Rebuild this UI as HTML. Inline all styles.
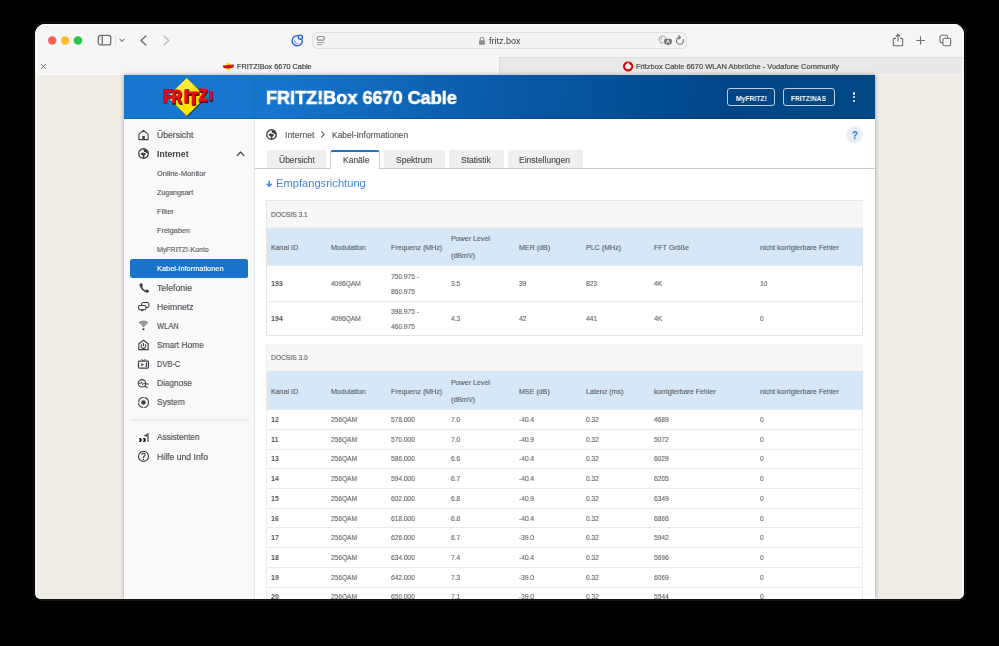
<!DOCTYPE html>
<html><head><meta charset="utf-8">
<style>
*{margin:0;padding:0;box-sizing:border-box}
html,body{width:999px;height:646px;background:#000;overflow:hidden;font-family:"Liberation Sans",sans-serif}
.a{position:absolute}
.t{position:absolute;line-height:1;white-space:nowrap;transform-origin:0 0;will-change:transform}
#win{position:absolute;left:0;top:0;width:999px;height:646px;clip-path:inset(24px 35px 47px 35px round 10px 10px 6px 6px);background:#f0ede6}
</style></head><body>

<div class="a" style="left:32.8px;top:22.3px;width:933.5px;height:578.5px;border-radius:12px 12px 8px 8px;background:#131313"></div>
<div class="a" style="left:34.4px;top:23.3px;width:930.2px;height:576.2px;border-radius:10.5px 10.5px 6.5px 6.5px;background:#000"></div>
<div id="win">
<div class="a" style="left:35px;top:24px;width:929px;height:33px;background:#f6f6f6"></div>
<div class="a" style="left:35px;top:24px;width:929px;height:2px;background:#fcfcfc"></div>
<svg class="a" style="left:44px;top:32px" width="42" height="17" viewBox="0 0 42 17"><circle cx="8.2" cy="8.5" r="4.2" fill="#ff5f57"/><circle cx="21.1" cy="8.5" r="4.2" fill="#febc2e"/><circle cx="34" cy="8.5" r="4.2" fill="#28c840"/></svg>
<svg class="a" style="left:97px;top:34px" width="15" height="12" viewBox="0 0 15 12"><rect x="1.3" y="1.3" width="12.4" height="9.6" rx="2.2" fill="none" stroke="#6f6f6f" stroke-width="1.3"/><line x1="5.3" y1="1.5" x2="5.3" y2="10.8" stroke="#6f6f6f" stroke-width="1.2"/><line x1="2.9" y1="3.6" x2="3.9" y2="3.6" stroke="#9a9a9a" stroke-width="0.8"/><line x1="2.9" y1="5.2" x2="3.9" y2="5.2" stroke="#9a9a9a" stroke-width="0.8"/></svg>
<div class="a" style="left:115px;top:35px;width:1px;height:11px;background:#e2e2e2"></div>
<svg class="a" style="left:118px;top:37px" width="8" height="6" viewBox="0 0 8 6"><polyline points="1.9,2.2 4,4.3 6.1,2.2" fill="none" stroke="#7a7a7a" stroke-width="1.05" stroke-linecap="round" stroke-linejoin="round"/></svg>
<svg class="a" style="left:139px;top:35px" width="9" height="11" viewBox="0 0 9 11"><polyline points="6.8,1 2,5.5 6.8,10" fill="none" stroke="#6a6a6a" stroke-width="1.3" stroke-linecap="round" stroke-linejoin="round"/></svg>
<svg class="a" style="left:162px;top:35px" width="9" height="11" viewBox="0 0 9 11"><polyline points="2,1 6.8,5.5 2,10" fill="none" stroke="#b9b9b9" stroke-width="1.3" stroke-linecap="round" stroke-linejoin="round"/></svg>
<svg class="a" style="left:290px;top:33px" width="14" height="14" viewBox="0 0 14 14"><path d="M9.6 3.2 A5.1 5.1 0 1 0 12.3 7.2" fill="none" stroke="#1f5fe3" stroke-width="1.35" stroke-linecap="round"/><path d="M4.1 6.5 A3.3 3.3 0 0 0 8.4 10.8 A12 12 0 0 1 4.1 6.5 Z" fill="#8fb0f2"/><circle cx="10.4" cy="4.2" r="2.05" fill="#fff" stroke="#1f5fe3" stroke-width="1.3"/></svg>
<div class="a" style="left:312px;top:32px;width:375px;height:17.3px;border-radius:5.5px;background:#f3f3f3;box-shadow:inset 0 0 0 1px #e0e0e0"></div>
<svg class="a" style="left:316px;top:35px" width="10" height="11" viewBox="0 0 10 11"><rect x="1.2" y="1.5" width="7.2" height="3.6" rx="1.4" fill="none" stroke="#8a8a8a" stroke-width="1.1"/><line x1="1" y1="7.6" x2="8.4" y2="7.6" stroke="#a0a0a0" stroke-width="1"/><line x1="1" y1="9.6" x2="6" y2="9.6" stroke="#a0a0a0" stroke-width="1"/></svg>
<svg class="a" style="left:478px;top:36px" width="8" height="10" viewBox="0 0 8 10"><path d="M2.2 4.3 V3.1 A1.8 1.8 0 0 1 5.8 3.1 V4.3" fill="none" stroke="#8c8c8c" stroke-width="1.1"/><rect x="1" y="4.3" width="6" height="4.4" rx="0.8" fill="#8c8c8c"/></svg>
<div class="t" style="left:489px;top:37px;font-size:9.0px;color:#3b3b3b;">fritz.box</div>
<svg class="a" style="left:658px;top:35px" width="15" height="11" viewBox="0 0 15 11"><path d="M4.6 1 C2.4 1 1.2 2.5 1.2 4.3 C1.2 5.8 2 6.9 3.1 7.3 L2.9 8.6 L4.4 7.6 L5.6 7.6" fill="none" stroke="#a3a3a3" stroke-width="1"/><path d="M4.6 1 C6.6 1 7.8 2.2 7.9 3.8" fill="none" stroke="#a3a3a3" stroke-width="1"/><path d="M3.3 2.6 L3.3 5.2 M2.6 3.3 L4.4 3.3" stroke="#b0b0b0" stroke-width="0.7"/><rect x="6.2" y="3.8" width="7.6" height="5.6" rx="1.8" fill="#707070"/><path d="M9.3 9.2 L10.3 10.8 L10.9 9.2 Z" fill="#707070"/><path d="M8.3 8.2 L9.9 4.8 L11.6 8.2 M8.9 7 L11 7" fill="none" stroke="#f4f4f4" stroke-width="0.8"/></svg>
<svg class="a" style="left:675px;top:35px" width="10" height="11" viewBox="0 0 10 11"><path d="M4.9 2.3 A3.5 3.5 0 1 0 8.2 4.6" fill="none" stroke="#757575" stroke-width="1.1" stroke-linecap="round"/><polyline points="3.7,0.6 5.6,2.3 3.7,4" fill="none" stroke="#757575" stroke-width="1.1" stroke-linecap="round" stroke-linejoin="round"/></svg>
<svg class="a" style="left:892px;top:33px" width="12" height="14" viewBox="0 0 12 14"><path d="M4 5.4 H2.3 A1 1 0 0 0 1.3 6.4 V11.8 A1 1 0 0 0 2.3 12.8 H9.7 A1 1 0 0 0 10.7 11.8 V6.4 A1 1 0 0 0 9.7 5.4 H8" fill="none" stroke="#6e6e6e" stroke-width="1.1"/><line x1="6" y1="1.4" x2="6" y2="8.6" stroke="#6e6e6e" stroke-width="1.1"/><polyline points="3.8,3.5 6,1.3 8.2,3.5" fill="none" stroke="#6e6e6e" stroke-width="1.1" stroke-linejoin="round"/></svg>
<svg class="a" style="left:915px;top:35px" width="11" height="11" viewBox="0 0 11 11"><line x1="5.5" y1="1.2" x2="5.5" y2="9.8" stroke="#6e6e6e" stroke-width="1.1"/><line x1="1.2" y1="5.5" x2="9.8" y2="5.5" stroke="#6e6e6e" stroke-width="1.1"/></svg>
<svg class="a" style="left:938px;top:33px" width="15" height="14" viewBox="0 0 15 14"><rect x="2" y="2.3" width="7.6" height="7.6" rx="1.8" fill="none" stroke="#6e6e6e" stroke-width="1.1"/><rect x="4.9" y="5.2" width="7.8" height="7.6" rx="1.8" fill="#f6f6f6" stroke="#6e6e6e" stroke-width="1.1"/></svg>
<div class="a" style="left:35px;top:57px;width:929px;height:18px;background:#f6f6f6"></div>
<div class="a" style="left:499px;top:57px;width:465px;height:18px;background:#e8e8e8;border-top:1px solid #dcdcdc;border-left:1px solid #d9d9d9"></div>
<div class="a" style="left:35px;top:74px;width:929px;height:1px;background:rgba(255,255,255,0.55)"></div>
<svg class="a" style="left:40px;top:63px" width="7" height="7" viewBox="0 0 7 7"><line x1="1" y1="1" x2="6" y2="6" stroke="#7a7a7a" stroke-width="1"/><line x1="6" y1="1" x2="1" y2="6" stroke="#7a7a7a" stroke-width="1"/></svg>
<svg class="a" style="left:222px;top:61px" width="13" height="11" viewBox="0 0 13 11"><polygon points="6.3,1.3 10.8,5.6 6.3,10 1.8,5.6" fill="#ffe000"/><path d="M1 3.9 L4 4.6 L7 3.8 L12 3.6 L11.5 6.4 L8 7.2 L5 7.6 L1.4 7.1 Z" fill="#d3141c"/><path d="M4.5 4.6 L7.5 4.2 L7.2 6.6 L4.8 7 Z" fill="#a50e16" opacity="0.6"/></svg>
<div class="t" style="left:236.8px;top:63px;font-size:7.3px;color:#404040;-webkit-text-stroke:0.2px currentColor;">FRITZ!Box 6670 Cable</div>
<svg class="a" style="left:622px;top:60px" width="12" height="12" viewBox="0 0 12 12"><circle cx="6.1" cy="6.3" r="4.1" fill="#fff" stroke="#e60000" stroke-width="2.1"/><path d="M6.2 1.8 Q6 3.4 6.9 4.6" fill="none" stroke="#fff" stroke-width="0.8"/><path d="M7.2 2.4 Q8.6 3.2 8.4 5" fill="none" stroke="#e60000" stroke-width="1.3"/></svg>
<div class="t" style="left:636.4px;top:63px;font-size:7.5px;color:#4c4c4c;-webkit-text-stroke:0.2px currentColor;">Fritzbox Cable 6670 WLAN Abbrüche - Vodafone Community</div>
<div class="a" style="left:35px;top:75px;width:929px;height:524px;background:#f0ede6"></div>
<div class="a" style="left:35.5px;top:24px;width:1.2px;height:575px;background:rgba(255,255,252,0.85)"></div>
<div class="a" style="left:962.3px;top:24px;width:1.2px;height:575px;background:rgba(255,255,252,0.85)"></div>
<div class="a" style="left:124px;top:75px;width:751px;height:524px;box-shadow:0 0 4px rgba(0,0,0,0.38)"></div>
<div class="a" style="left:124px;top:75px;width:751px;height:524px;background:#fff"></div>
<div class="a" style="left:124px;top:75px;width:751px;height:44px;background:linear-gradient(95deg,#1877cf 0%,#1775cc 20%,#0a59a8 50%,#004687 80%,#004884 100%)"></div>
<div class="a" style="left:254px;top:75px;width:1px;height:44px;background:rgba(0,0,0,0.08)"></div>
<div class="a" style="left:124px;top:118px;width:751px;height:1px;background:rgba(0,0,0,0.12)"></div>
<svg class="a" style="left:162px;top:76px" width="56" height="42" viewBox="0 0 56 42">
<polygon points="24.8,2 44,21 24.8,40 5.6,21" fill="#0b2f6a" transform="translate(0.8,0.8)"/>
<polygon points="24.8,2 44,21 24.8,40 5.6,21" fill="#ffe400"/>
<polygon points="24.8,2.6 33,10.6 15,19 11,15" fill="#fff7a0" opacity="0.35"/>
<g font-family="Liberation Sans" font-weight="bold" fill="#2a0606" stroke="#2a0606" stroke-width="1.5" transform="translate(0.8,0.9)"><text x="1.26" y="26.5" font-size="18.85" textLength="8.03" lengthAdjust="spacingAndGlyphs">F</text><text x="9.66" y="27" font-size="18.85" textLength="9.67" lengthAdjust="spacingAndGlyphs">R</text><text x="21.78" y="26.5" font-size="18.44" textLength="4.79" lengthAdjust="spacingAndGlyphs">I</text><text x="26.38" y="27.7" font-size="16.48" textLength="9.63" lengthAdjust="spacingAndGlyphs">T</text><text x="36.46" y="24.9" font-size="16.9" textLength="8.77" lengthAdjust="spacingAndGlyphs">Z</text><text x="46.73" y="24.3" font-size="13.41" textLength="3.89" lengthAdjust="spacingAndGlyphs">!</text></g>
<g font-family="Liberation Sans" font-weight="bold" fill="#ea0a1e" stroke="#ea0a1e" stroke-width="0.9"><text x="1.26" y="26.5" font-size="18.85" textLength="8.03" lengthAdjust="spacingAndGlyphs">F</text><text x="9.66" y="27" font-size="18.85" textLength="9.67" lengthAdjust="spacingAndGlyphs">R</text><text x="21.78" y="26.5" font-size="18.44" textLength="4.79" lengthAdjust="spacingAndGlyphs">I</text><text x="26.38" y="27.7" font-size="16.48" textLength="9.63" lengthAdjust="spacingAndGlyphs">T</text><text x="36.46" y="24.9" font-size="16.9" textLength="8.77" lengthAdjust="spacingAndGlyphs">Z</text><text x="46.73" y="24.3" font-size="13.41" textLength="3.89" lengthAdjust="spacingAndGlyphs">!</text></g></svg>
<div class="t" style="left:265.8px;top:89px;font-size:18.6px;color:#fff;font-weight:bold;transform:scaleX(0.972);-webkit-text-stroke:0.6px #fff;">FRITZ!Box 6670 Cable</div>
<div class="a" style="left:727.3px;top:88.2px;width:47.7px;height:17.5px;border:1px solid rgba(220,232,245,0.85);border-radius:3px"></div>
<div class="t" style="left:735.6px;top:95px;font-size:7.3px;color:#fff;font-weight:bold;transform:scaleX(0.93);">MyFRITZ!</div>
<div class="a" style="left:782.7px;top:88.2px;width:52.1px;height:17.5px;border:1px solid rgba(220,232,245,0.85);border-radius:3px"></div>
<div class="t" style="left:790.9px;top:95px;font-size:7.3px;color:#fff;font-weight:bold;transform:scaleX(0.91);">FRITZ!NAS</div>
<div class="a" style="left:853.3px;top:92.4px;width:2.2px;height:2.2px;border-radius:50%;background:#fff"></div>
<div class="a" style="left:853.3px;top:96.10000000000001px;width:2.2px;height:2.2px;border-radius:50%;background:#fff"></div>
<div class="a" style="left:853.3px;top:99.80000000000001px;width:2.2px;height:2.2px;border-radius:50%;background:#fff"></div>
<div class="a" style="left:124px;top:119px;width:130px;height:480px;background:#f9f9f9"></div>
<div class="a" style="left:254px;top:119px;width:1px;height:480px;background:#e8e8e8"></div>
<div class="t" style="left:157px;top:131px;font-size:8.6px;color:#4a4e54;transform:scaleX(0.997);-webkit-text-stroke:0.15px currentColor;">Übersicht</div>
<div class="t" style="left:157px;top:150px;font-size:8.6px;color:#3a3e44;font-weight:bold;">Internet</div>
<svg class="a" style="left:236px;top:150px" width="9" height="7" viewBox="0 0 9 7"><polyline points="1.2,5.6 4.5,2 7.8,5.6" fill="none" stroke="#3c4046" stroke-width="1.2" stroke-linecap="round" stroke-linejoin="round"/></svg>
<div class="t" style="left:157px;top:170px;font-size:7.4px;color:#54585e;transform:scaleX(1.006);-webkit-text-stroke:0.15px currentColor;">Online-Monitor</div>
<div class="t" style="left:157px;top:189px;font-size:7.4px;color:#54585e;transform:scaleX(0.969);-webkit-text-stroke:0.15px currentColor;">Zugangsart</div>
<div class="t" style="left:157px;top:208px;font-size:7.4px;color:#54585e;transform:scaleX(1.028);-webkit-text-stroke:0.15px currentColor;">Filter</div>
<div class="t" style="left:157px;top:227px;font-size:7.4px;color:#54585e;transform:scaleX(0.986);-webkit-text-stroke:0.15px currentColor;">Freigaben</div>
<div class="t" style="left:157px;top:246px;font-size:7.4px;color:#54585e;transform:scaleX(0.948);-webkit-text-stroke:0.15px currentColor;">MyFRITZ!-Konto</div>
<div class="a" style="left:130px;top:259px;width:118px;height:19px;background:#1b74cc;border-radius:2.5px"></div>
<div class="t" style="left:157px;top:265px;font-size:7.4px;color:#fff;-webkit-text-stroke:0.15px #fff;">Kabel-Informationen</div>
<div class="t" style="left:157px;top:284px;font-size:8.6px;color:#4a4e54;transform:scaleX(1.018);-webkit-text-stroke:0.15px currentColor;">Telefonie</div>
<div class="t" style="left:157px;top:303px;font-size:8.6px;color:#4a4e54;transform:scaleX(1.004);-webkit-text-stroke:0.15px currentColor;">Heimnetz</div>
<div class="t" style="left:157px;top:322px;font-size:8.6px;color:#4a4e54;transform:scaleX(0.88);-webkit-text-stroke:0.15px currentColor;">WLAN</div>
<div class="t" style="left:157px;top:341px;font-size:8.6px;color:#4a4e54;transform:scaleX(0.969);-webkit-text-stroke:0.15px currentColor;">Smart Home</div>
<div class="t" style="left:157px;top:360px;font-size:8.6px;color:#4a4e54;transform:scaleX(0.871);-webkit-text-stroke:0.15px currentColor;">DVB-C</div>
<div class="t" style="left:157px;top:379px;font-size:8.6px;color:#4a4e54;transform:scaleX(0.961);-webkit-text-stroke:0.15px currentColor;">Diagnose</div>
<div class="t" style="left:157px;top:398px;font-size:8.6px;color:#4a4e54;transform:scaleX(0.975);-webkit-text-stroke:0.15px currentColor;">System</div>
<div class="a" style="left:130.5px;top:419px;width:118px;height:2px;background:#ebebeb"></div>
<div class="t" style="left:157px;top:433px;font-size:8.6px;color:#4a4e54;transform:scaleX(0.958);-webkit-text-stroke:0.15px currentColor;">Assistenten</div>
<div class="t" style="left:157px;top:453px;font-size:8.6px;color:#4a4e54;transform:scaleX(1.006);-webkit-text-stroke:0.15px currentColor;">Hilfe und Info</div>
<svg class="a" style="left:137px;top:129px" width="13" height="12" viewBox="0 0 13 12"><path d="M1.9 10.6 V5.2 L6.5 1.3 L11.1 5.2 V10.6 Z" fill="none" stroke="#3c4046" stroke-width="1.1" stroke-linejoin="round"/><rect x="5.3" y="6.9" width="2.5" height="3.8" fill="#3c4046"/></svg>
<svg class="a" style="left:137.3px;top:147.2px" width="13" height="13" viewBox="0 0 13 13"><circle cx="6.5" cy="6.5" r="4.75" fill="none" stroke="#3c4046" stroke-width="1.35"/><path d="M6.9 1.9 L9.6 2.8 L11 5 L10.9 6.2 L9.2 5.9 L8.4 5.1 L7.2 4.9 L6.6 3.6 Z" fill="#3c4046"/><path d="M3.6 6.2 L5.6 5.6 L8.2 6.1 L8.9 6.9 L7.6 8.4 L7.1 10.9 L6.2 10.9 L5.7 8.6 L4.1 7.5 Z" fill="#3c4046"/><path d="M11.2 7.3 L8.9 11.2 L10.2 10.4 L11.3 8.6 Z" fill="#3c4046"/><path d="M2.2 5.0 L4.6 3.0 L3.2 3.2 Z" fill="#3c4046"/></svg>
<svg class="a" style="left:138px;top:282px" width="12" height="12" viewBox="0 0 12 12"><path d="M2.3 1.4 L3.9 1.2 L5 3.6 L4 4.8 Q5 7.4 7.4 8.4 L8.6 7.3 L10.9 8.5 L10.7 10.1 Q10 11 8.6 10.7 Q3.6 9.2 1.5 3.6 Q1.3 2.2 2.3 1.4 Z" fill="#3c4046"/></svg>
<svg class="a" style="left:137px;top:301px" width="13" height="11" viewBox="0 0 13 11"><rect x="4.6" y="1.5" width="7.3" height="4.9" rx="1.5" fill="#f9f9f9" stroke="#3c4046" stroke-width="1.05"/><rect x="1.6" y="4.4" width="7.4" height="4.3" rx="1.4" fill="#f9f9f9" stroke="#3c4046" stroke-width="1.05"/><rect x="3.9" y="8.4" width="2.5" height="1.7" fill="#3c4046"/></svg>
<svg class="a" style="left:137px;top:320px" width="13" height="11" viewBox="0 0 13 11"><path d="M6.5 7.6 L1.6 2.3 Q6.5 -1.2 11.4 2.3 Z" fill="#8a8d92"/><path d="M2.9 3.8 Q6.5 1.2 10.1 3.8 M4.2 5.3 Q6.5 3.6 8.8 5.3" fill="none" stroke="#f9f9f9" stroke-width="0.5" opacity="0.6"/><circle cx="6.5" cy="9.3" r="1.05" fill="#2c3036"/></svg>
<svg class="a" style="left:137px;top:339px" width="13" height="12" viewBox="0 0 13 12"><path d="M1.8 10.6 V4.8 L6.5 1.2 L11.2 4.8 V10.6 Z" fill="none" stroke="#3c4046" stroke-width="1.1" stroke-linejoin="round"/><path d="M4.9 5.4 A2.3 2.3 0 1 0 8.1 5.4" fill="none" stroke="#3c4046" stroke-width="1.1"/><line x1="6.5" y1="4" x2="6.5" y2="7.2" stroke="#3c4046" stroke-width="1.1"/></svg>
<svg class="a" style="left:137px;top:358px" width="13" height="12" viewBox="0 0 13 12"><rect x="1.5" y="3.2" width="10" height="6.9" rx="0.8" fill="none" stroke="#3c4046" stroke-width="1.2"/><line x1="4.5" y1="1" x2="6.5" y2="3" stroke="#3c4046" stroke-width="0.9"/><line x1="8.5" y1="1" x2="6.5" y2="3" stroke="#3c4046" stroke-width="0.9"/><path d="M4.3 5 V8.3 L7 6.65 Z" fill="#3c4046"/><line x1="9.4" y1="4.5" x2="9.4" y2="9" stroke="#3c4046" stroke-width="1.3"/></svg>
<svg class="a" style="left:137px;top:378px" width="13" height="11" viewBox="0 0 13 11"><circle cx="5" cy="5.3" r="3.7" fill="none" stroke="#3c4046" stroke-width="1.1"/><path d="M1.6 5.4 L3.4 5.4 L4.4 3.9 L5.6 6.8 L6.5 5.4 L8.6 5.4" fill="none" stroke="#3c4046" stroke-width="0.9"/><line x1="7.6" y1="8" x2="10.6" y2="9.8" stroke="#3c4046" stroke-width="1.3"/><line x1="8.8" y1="6" x2="11.6" y2="6" stroke="#3c4046" stroke-width="1.1"/></svg>
<svg class="a" style="left:137px;top:396px" width="13" height="13" viewBox="0 0 13 13"><circle cx="6.5" cy="6.5" r="5" fill="none" stroke="#3c4046" stroke-width="1.1" stroke-dasharray="7 1"/><circle cx="6.5" cy="6.5" r="2.3" fill="#3c4046"/></svg>
<svg class="a" style="left:137px;top:432px" width="13" height="11" viewBox="0 0 13 11"><path d="M1.9 5.9 H4.1 L5 7.9 L4.1 9.9 H1.9 L2.7 7.9 Z" fill="#23272d"/><path d="M5.9 5.9 H8.1 L9 7.9 L8.1 9.9 H5.9 L6.7 7.9 Z" fill="#23272d"/><rect x="10.1" y="1" width="1.8" height="8.8" fill="#7d8187"/><path d="M6.6 3.4 L10.1 2 V4.8 Z" fill="#2c3036"/></svg>
<svg class="a" style="left:137px;top:450px" width="13" height="13" viewBox="0 0 13 13"><circle cx="6.5" cy="6.4" r="5" fill="none" stroke="#3c4046" stroke-width="1.1"/><path d="M4.8 5 Q4.8 3.3 6.5 3.3 Q8.2 3.3 8.2 4.8 Q8.2 5.8 6.8 6.4 L6.5 7.8" fill="none" stroke="#3c4046" stroke-width="1.1"/><circle cx="6.5" cy="9.4" r="0.7" fill="#3c4046"/></svg>
<svg class="a" style="left:265.3px;top:127.9px" width="13" height="13" viewBox="0 0 13 13"><circle cx="6.5" cy="6.5" r="4.75" fill="none" stroke="#3c4046" stroke-width="1.35"/><path d="M6.9 1.9 L9.6 2.8 L11 5 L10.9 6.2 L9.2 5.9 L8.4 5.1 L7.2 4.9 L6.6 3.6 Z" fill="#3c4046"/><path d="M3.6 6.2 L5.6 5.6 L8.2 6.1 L8.9 6.9 L7.6 8.4 L7.1 10.9 L6.2 10.9 L5.7 8.6 L4.1 7.5 Z" fill="#3c4046"/><path d="M11.2 7.3 L8.9 11.2 L10.2 10.4 L11.3 8.6 Z" fill="#3c4046"/><path d="M2.2 5.0 L4.6 3.0 L3.2 3.2 Z" fill="#3c4046"/></svg>
<div class="t" style="left:285.3px;top:131px;font-size:8.7px;color:#54585e;-webkit-text-stroke:0.15px currentColor;">Internet</div>
<svg class="a" style="left:320px;top:130px" width="6" height="9" viewBox="0 0 6 9"><polyline points="1.6,1.5 4.2,4.3 1.6,7.1" fill="none" stroke="#54585e" stroke-width="1.1" stroke-linecap="round" stroke-linejoin="round"/></svg>
<div class="t" style="left:331.6px;top:131px;font-size:8.48px;color:#54585e;-webkit-text-stroke:0.15px currentColor;">Kabel-Informationen</div>
<div class="a" style="left:846px;top:125.9px;width:17px;height:17px;border-radius:50%;background:#e8eff9"></div>
<div class="t" style="left:851.6px;top:131px;font-size:10.2px;color:#1a6fd0;font-weight:bold;transform:scaleX(0.92);">?</div>
<div class="a" style="left:255px;top:168px;width:620px;height:1px;background:#c9c9c9"></div>
<div class="a" style="left:267px;top:150px;width:59.30000000000001px;height:18px;background:#efefef;border-radius:2px 2px 0 0"></div>
<div class="a" style="left:330.4px;top:150.3px;width:50.0px;height:19px;background:#fff;border:1px solid #cfcfcf;border-bottom:none;border-top:2px solid #1b74cc;border-radius:3px 3px 0 0"></div>
<div class="a" style="left:384.4px;top:150px;width:60.60000000000002px;height:18px;background:#efefef;border-radius:2px 2px 0 0"></div>
<div class="a" style="left:449.4px;top:150px;width:54.400000000000034px;height:18px;background:#efefef;border-radius:2px 2px 0 0"></div>
<div class="a" style="left:508.2px;top:150px;width:74.40000000000003px;height:18px;background:#efefef;border-radius:2px 2px 0 0"></div>
<div class="t" style="left:278.6px;top:156px;font-size:8.5px;color:#4a4e54;-webkit-text-stroke:0.15px currentColor;">Übersicht</div>
<div class="t" style="left:342.7px;top:156px;font-size:8.5px;color:#4a4e54;-webkit-text-stroke:0.15px currentColor;">Kanäle</div>
<div class="t" style="left:396px;top:156px;font-size:8.5px;color:#4a4e54;-webkit-text-stroke:0.15px currentColor;">Spektrum</div>
<div class="t" style="left:460.8px;top:156px;font-size:8.5px;color:#4a4e54;-webkit-text-stroke:0.15px currentColor;">Statistik</div>
<div class="t" style="left:519.4px;top:156px;font-size:8.5px;color:#4a4e54;-webkit-text-stroke:0.15px currentColor;">Einstellungen</div>
<svg class="a" style="left:265px;top:180px" width="8" height="8" viewBox="0 0 8 8"><line x1="4.2" y1="0.8" x2="4.2" y2="6" stroke="#3f87d8" stroke-width="1.5"/><polyline points="1.8,3.7 4.2,6.1 6.6,3.7" fill="none" stroke="#3f87d8" stroke-width="1.5" stroke-linejoin="miter"/></svg>
<div class="t" style="left:275.9px;top:178px;font-size:11.15px;color:#3f87d8;">Empfangsrichtung</div>
<div class="a" style="left:266px;top:200px;width:597px;height:136px;border:1px solid #e6e6e6"></div>
<div class="a" style="left:266.5px;top:200.5px;width:596px;height:28px;background:#f7f7f5"></div>
<div class="t" style="left:270.6px;top:211px;font-size:7.6px;color:#555a60;transform:scaleX(0.88);-webkit-text-stroke:0.12px currentColor;">DOCSIS 3.1</div>
<div class="a" style="left:266.5px;top:227.7px;width:596px;height:38.5px;background:#d6e7f7;box-shadow:0 -0.5px 0 rgba(0,0,0,0.06)"></div>
<div class="t" style="left:270.6px;top:244px;font-size:7.6px;color:#555a60;transform:scaleX(0.934);-webkit-text-stroke:0.12px currentColor;">Kanal ID</div>
<div class="t" style="left:330.7px;top:244px;font-size:7.6px;color:#555a60;transform:scaleX(0.934);-webkit-text-stroke:0.12px currentColor;">Modulation</div>
<div class="t" style="left:390.7px;top:244px;font-size:7.6px;color:#555a60;transform:scaleX(0.934);-webkit-text-stroke:0.12px currentColor;">Frequenz (MHz)</div>
<div class="t" style="left:450.8px;top:235px;font-size:7.6px;color:#555a60;transform:scaleX(0.934);-webkit-text-stroke:0.12px currentColor;">Power Level</div>
<div class="t" style="left:450.8px;top:252px;font-size:7.6px;color:#555a60;transform:scaleX(0.934);-webkit-text-stroke:0.12px currentColor;">(dBmV)</div>
<div class="t" style="left:518.7px;top:244px;font-size:7.6px;color:#555a60;transform:scaleX(0.934);-webkit-text-stroke:0.12px currentColor;">MER (dB)</div>
<div class="t" style="left:586.4px;top:244px;font-size:7.6px;color:#555a60;transform:scaleX(0.934);-webkit-text-stroke:0.12px currentColor;">PLC (MHz)</div>
<div class="t" style="left:654.3px;top:244px;font-size:7.6px;color:#555a60;transform:scaleX(0.934);-webkit-text-stroke:0.12px currentColor;">FFT Größe</div>
<div class="t" style="left:760px;top:244px;font-size:7.6px;color:#555a60;transform:scaleX(0.934);-webkit-text-stroke:0.12px currentColor;">nicht korrigierbare Fehler</div>
<div class="t" style="left:270.6px;top:280px;font-size:7.6px;color:#4a4e54;font-weight:bold;transform:scaleX(0.93);">193</div>
<div class="t" style="left:330.7px;top:280px;font-size:7.6px;color:#5a5e63;transform:scaleX(0.87);-webkit-text-stroke:0.12px currentColor;">4096QAM</div>
<div class="t" style="left:390.7px;top:273px;font-size:7.6px;color:#5a5e63;transform:scaleX(0.87);-webkit-text-stroke:0.12px currentColor;">750.975 -</div>
<div class="t" style="left:390.7px;top:288px;font-size:7.6px;color:#5a5e63;transform:scaleX(0.87);-webkit-text-stroke:0.12px currentColor;">860.975</div>
<div class="t" style="left:450.8px;top:280px;font-size:7.6px;color:#5a5e63;transform:scaleX(0.87);-webkit-text-stroke:0.12px currentColor;">3.5</div>
<div class="t" style="left:518.7px;top:280px;font-size:7.6px;color:#5a5e63;transform:scaleX(0.87);-webkit-text-stroke:0.12px currentColor;">39</div>
<div class="t" style="left:586.4px;top:280px;font-size:7.6px;color:#5a5e63;transform:scaleX(0.87);-webkit-text-stroke:0.12px currentColor;">823</div>
<div class="t" style="left:654.3px;top:280px;font-size:7.6px;color:#5a5e63;transform:scaleX(0.87);-webkit-text-stroke:0.12px currentColor;">4K</div>
<div class="t" style="left:760px;top:280px;font-size:7.6px;color:#5a5e63;transform:scaleX(0.87);-webkit-text-stroke:0.12px currentColor;">10</div>
<div class="a" style="left:266.5px;top:300.59999999999997px;width:596px;height:1px;background:#ebebeb"></div>
<div class="t" style="left:270.6px;top:315px;font-size:7.6px;color:#4a4e54;font-weight:bold;transform:scaleX(0.93);">194</div>
<div class="t" style="left:330.7px;top:315px;font-size:7.6px;color:#5a5e63;transform:scaleX(0.87);-webkit-text-stroke:0.12px currentColor;">4096QAM</div>
<div class="t" style="left:390.7px;top:308px;font-size:7.6px;color:#5a5e63;transform:scaleX(0.87);-webkit-text-stroke:0.12px currentColor;">398.975 -</div>
<div class="t" style="left:390.7px;top:323px;font-size:7.6px;color:#5a5e63;transform:scaleX(0.87);-webkit-text-stroke:0.12px currentColor;">460.975</div>
<div class="t" style="left:450.8px;top:315px;font-size:7.6px;color:#5a5e63;transform:scaleX(0.87);-webkit-text-stroke:0.12px currentColor;">4.3</div>
<div class="t" style="left:518.7px;top:315px;font-size:7.6px;color:#5a5e63;transform:scaleX(0.87);-webkit-text-stroke:0.12px currentColor;">42</div>
<div class="t" style="left:586.4px;top:315px;font-size:7.6px;color:#5a5e63;transform:scaleX(0.87);-webkit-text-stroke:0.12px currentColor;">441</div>
<div class="t" style="left:654.3px;top:315px;font-size:7.6px;color:#5a5e63;transform:scaleX(0.87);-webkit-text-stroke:0.12px currentColor;">4K</div>
<div class="t" style="left:760px;top:315px;font-size:7.6px;color:#5a5e63;transform:scaleX(0.87);-webkit-text-stroke:0.12px currentColor;">0</div>
<div class="a" style="left:266px;top:343.5px;width:597px;height:260px;border:1px solid #ededed"></div>
<div class="a" style="left:266.5px;top:344.2px;width:596px;height:28px;background:#f7f7f5"></div>
<div class="t" style="left:270.6px;top:354px;font-size:7.6px;color:#555a60;transform:scaleX(0.88);-webkit-text-stroke:0.12px currentColor;">DOCSIS 3.0</div>
<div class="a" style="left:266.5px;top:371.3px;width:596px;height:38.3px;background:#d6e7f7;box-shadow:0 -0.5px 0 rgba(0,0,0,0.06)"></div>
<div class="t" style="left:270.6px;top:388px;font-size:7.6px;color:#555a60;transform:scaleX(0.934);-webkit-text-stroke:0.12px currentColor;">Kanal ID</div>
<div class="t" style="left:330.7px;top:388px;font-size:7.6px;color:#555a60;transform:scaleX(0.934);-webkit-text-stroke:0.12px currentColor;">Modulation</div>
<div class="t" style="left:390.7px;top:388px;font-size:7.6px;color:#555a60;transform:scaleX(0.934);-webkit-text-stroke:0.12px currentColor;">Frequenz (MHz)</div>
<div class="t" style="left:450.8px;top:379px;font-size:7.6px;color:#555a60;transform:scaleX(0.934);-webkit-text-stroke:0.12px currentColor;">Power Level</div>
<div class="t" style="left:450.8px;top:396px;font-size:7.6px;color:#555a60;transform:scaleX(0.934);-webkit-text-stroke:0.12px currentColor;">(dBmV)</div>
<div class="t" style="left:518.7px;top:388px;font-size:7.6px;color:#555a60;transform:scaleX(0.934);-webkit-text-stroke:0.12px currentColor;">MSE (dB)</div>
<div class="t" style="left:586.4px;top:388px;font-size:7.6px;color:#555a60;transform:scaleX(0.934);-webkit-text-stroke:0.12px currentColor;">Latenz (ms)</div>
<div class="t" style="left:654.3px;top:388px;font-size:7.6px;color:#555a60;transform:scaleX(0.934);-webkit-text-stroke:0.12px currentColor;">korrigierbare Fehler</div>
<div class="t" style="left:760px;top:388px;font-size:7.6px;color:#555a60;transform:scaleX(0.934);-webkit-text-stroke:0.12px currentColor;">nicht korrigierbare Fehler</div>
<div class="t" style="left:270.6px;top:416px;font-size:7.6px;color:#4a4e54;font-weight:bold;transform:scaleX(0.93);">12</div>
<div class="t" style="left:330.7px;top:416px;font-size:7.6px;color:#5a5e63;transform:scaleX(0.87);-webkit-text-stroke:0.12px currentColor;">256QAM</div>
<div class="t" style="left:390.7px;top:416px;font-size:7.6px;color:#5a5e63;transform:scaleX(0.87);-webkit-text-stroke:0.12px currentColor;">578.000</div>
<div class="t" style="left:450.8px;top:416px;font-size:7.6px;color:#5a5e63;transform:scaleX(0.87);-webkit-text-stroke:0.12px currentColor;">7.0</div>
<div class="t" style="left:518.7px;top:416px;font-size:7.6px;color:#5a5e63;transform:scaleX(0.87);-webkit-text-stroke:0.12px currentColor;">-40.4</div>
<div class="t" style="left:586.4px;top:416px;font-size:7.6px;color:#5a5e63;transform:scaleX(0.87);-webkit-text-stroke:0.12px currentColor;">0.32</div>
<div class="t" style="left:654.3px;top:416px;font-size:7.6px;color:#5a5e63;transform:scaleX(0.87);-webkit-text-stroke:0.12px currentColor;">4689</div>
<div class="t" style="left:760px;top:416px;font-size:7.6px;color:#5a5e63;transform:scaleX(0.87);-webkit-text-stroke:0.12px currentColor;">0</div>
<div class="a" style="left:266.5px;top:428.82000000000005px;width:596px;height:1px;background:#ebebeb"></div>
<div class="t" style="left:270.6px;top:436px;font-size:7.6px;color:#4a4e54;font-weight:bold;transform:scaleX(0.93);">11</div>
<div class="t" style="left:330.7px;top:436px;font-size:7.6px;color:#5a5e63;transform:scaleX(0.87);-webkit-text-stroke:0.12px currentColor;">256QAM</div>
<div class="t" style="left:390.7px;top:436px;font-size:7.6px;color:#5a5e63;transform:scaleX(0.87);-webkit-text-stroke:0.12px currentColor;">570.000</div>
<div class="t" style="left:450.8px;top:436px;font-size:7.6px;color:#5a5e63;transform:scaleX(0.87);-webkit-text-stroke:0.12px currentColor;">7.0</div>
<div class="t" style="left:518.7px;top:436px;font-size:7.6px;color:#5a5e63;transform:scaleX(0.87);-webkit-text-stroke:0.12px currentColor;">-40.9</div>
<div class="t" style="left:586.4px;top:436px;font-size:7.6px;color:#5a5e63;transform:scaleX(0.87);-webkit-text-stroke:0.12px currentColor;">0.32</div>
<div class="t" style="left:654.3px;top:436px;font-size:7.6px;color:#5a5e63;transform:scaleX(0.87);-webkit-text-stroke:0.12px currentColor;">5072</div>
<div class="t" style="left:760px;top:436px;font-size:7.6px;color:#5a5e63;transform:scaleX(0.87);-webkit-text-stroke:0.12px currentColor;">0</div>
<div class="a" style="left:266.5px;top:448.5400000000001px;width:596px;height:1px;background:#ebebeb"></div>
<div class="t" style="left:270.6px;top:455px;font-size:7.6px;color:#4a4e54;font-weight:bold;transform:scaleX(0.93);">13</div>
<div class="t" style="left:330.7px;top:455px;font-size:7.6px;color:#5a5e63;transform:scaleX(0.87);-webkit-text-stroke:0.12px currentColor;">256QAM</div>
<div class="t" style="left:390.7px;top:455px;font-size:7.6px;color:#5a5e63;transform:scaleX(0.87);-webkit-text-stroke:0.12px currentColor;">586.000</div>
<div class="t" style="left:450.8px;top:455px;font-size:7.6px;color:#5a5e63;transform:scaleX(0.87);-webkit-text-stroke:0.12px currentColor;">6.6</div>
<div class="t" style="left:518.7px;top:455px;font-size:7.6px;color:#5a5e63;transform:scaleX(0.87);-webkit-text-stroke:0.12px currentColor;">-40.4</div>
<div class="t" style="left:586.4px;top:455px;font-size:7.6px;color:#5a5e63;transform:scaleX(0.87);-webkit-text-stroke:0.12px currentColor;">0.32</div>
<div class="t" style="left:654.3px;top:455px;font-size:7.6px;color:#5a5e63;transform:scaleX(0.87);-webkit-text-stroke:0.12px currentColor;">6029</div>
<div class="t" style="left:760px;top:455px;font-size:7.6px;color:#5a5e63;transform:scaleX(0.87);-webkit-text-stroke:0.12px currentColor;">0</div>
<div class="a" style="left:266.5px;top:468.26px;width:596px;height:1px;background:#ebebeb"></div>
<div class="t" style="left:270.6px;top:475px;font-size:7.6px;color:#4a4e54;font-weight:bold;transform:scaleX(0.93);">14</div>
<div class="t" style="left:330.7px;top:475px;font-size:7.6px;color:#5a5e63;transform:scaleX(0.87);-webkit-text-stroke:0.12px currentColor;">256QAM</div>
<div class="t" style="left:390.7px;top:475px;font-size:7.6px;color:#5a5e63;transform:scaleX(0.87);-webkit-text-stroke:0.12px currentColor;">594.000</div>
<div class="t" style="left:450.8px;top:475px;font-size:7.6px;color:#5a5e63;transform:scaleX(0.87);-webkit-text-stroke:0.12px currentColor;">6.7</div>
<div class="t" style="left:518.7px;top:475px;font-size:7.6px;color:#5a5e63;transform:scaleX(0.87);-webkit-text-stroke:0.12px currentColor;">-40.4</div>
<div class="t" style="left:586.4px;top:475px;font-size:7.6px;color:#5a5e63;transform:scaleX(0.87);-webkit-text-stroke:0.12px currentColor;">0.32</div>
<div class="t" style="left:654.3px;top:475px;font-size:7.6px;color:#5a5e63;transform:scaleX(0.87);-webkit-text-stroke:0.12px currentColor;">6205</div>
<div class="t" style="left:760px;top:475px;font-size:7.6px;color:#5a5e63;transform:scaleX(0.87);-webkit-text-stroke:0.12px currentColor;">0</div>
<div class="a" style="left:266.5px;top:487.98px;width:596px;height:1px;background:#ebebeb"></div>
<div class="t" style="left:270.6px;top:495px;font-size:7.6px;color:#4a4e54;font-weight:bold;transform:scaleX(0.93);">15</div>
<div class="t" style="left:330.7px;top:495px;font-size:7.6px;color:#5a5e63;transform:scaleX(0.87);-webkit-text-stroke:0.12px currentColor;">256QAM</div>
<div class="t" style="left:390.7px;top:495px;font-size:7.6px;color:#5a5e63;transform:scaleX(0.87);-webkit-text-stroke:0.12px currentColor;">602.000</div>
<div class="t" style="left:450.8px;top:495px;font-size:7.6px;color:#5a5e63;transform:scaleX(0.87);-webkit-text-stroke:0.12px currentColor;">6.8</div>
<div class="t" style="left:518.7px;top:495px;font-size:7.6px;color:#5a5e63;transform:scaleX(0.87);-webkit-text-stroke:0.12px currentColor;">-40.9</div>
<div class="t" style="left:586.4px;top:495px;font-size:7.6px;color:#5a5e63;transform:scaleX(0.87);-webkit-text-stroke:0.12px currentColor;">0.32</div>
<div class="t" style="left:654.3px;top:495px;font-size:7.6px;color:#5a5e63;transform:scaleX(0.87);-webkit-text-stroke:0.12px currentColor;">6349</div>
<div class="t" style="left:760px;top:495px;font-size:7.6px;color:#5a5e63;transform:scaleX(0.87);-webkit-text-stroke:0.12px currentColor;">0</div>
<div class="a" style="left:266.5px;top:507.70000000000005px;width:596px;height:1px;background:#ebebeb"></div>
<div class="t" style="left:270.6px;top:515px;font-size:7.6px;color:#4a4e54;font-weight:bold;transform:scaleX(0.93);">16</div>
<div class="t" style="left:330.7px;top:515px;font-size:7.6px;color:#5a5e63;transform:scaleX(0.87);-webkit-text-stroke:0.12px currentColor;">256QAM</div>
<div class="t" style="left:390.7px;top:515px;font-size:7.6px;color:#5a5e63;transform:scaleX(0.87);-webkit-text-stroke:0.12px currentColor;">618.000</div>
<div class="t" style="left:450.8px;top:515px;font-size:7.6px;color:#5a5e63;transform:scaleX(0.87);-webkit-text-stroke:0.12px currentColor;">6.8</div>
<div class="t" style="left:518.7px;top:515px;font-size:7.6px;color:#5a5e63;transform:scaleX(0.87);-webkit-text-stroke:0.12px currentColor;">-40.4</div>
<div class="t" style="left:586.4px;top:515px;font-size:7.6px;color:#5a5e63;transform:scaleX(0.87);-webkit-text-stroke:0.12px currentColor;">0.32</div>
<div class="t" style="left:654.3px;top:515px;font-size:7.6px;color:#5a5e63;transform:scaleX(0.87);-webkit-text-stroke:0.12px currentColor;">6866</div>
<div class="t" style="left:760px;top:515px;font-size:7.6px;color:#5a5e63;transform:scaleX(0.87);-webkit-text-stroke:0.12px currentColor;">0</div>
<div class="a" style="left:266.5px;top:527.4200000000001px;width:596px;height:1px;background:#ebebeb"></div>
<div class="t" style="left:270.6px;top:534px;font-size:7.6px;color:#4a4e54;font-weight:bold;transform:scaleX(0.93);">17</div>
<div class="t" style="left:330.7px;top:534px;font-size:7.6px;color:#5a5e63;transform:scaleX(0.87);-webkit-text-stroke:0.12px currentColor;">256QAM</div>
<div class="t" style="left:390.7px;top:534px;font-size:7.6px;color:#5a5e63;transform:scaleX(0.87);-webkit-text-stroke:0.12px currentColor;">626.000</div>
<div class="t" style="left:450.8px;top:534px;font-size:7.6px;color:#5a5e63;transform:scaleX(0.87);-webkit-text-stroke:0.12px currentColor;">6.7</div>
<div class="t" style="left:518.7px;top:534px;font-size:7.6px;color:#5a5e63;transform:scaleX(0.87);-webkit-text-stroke:0.12px currentColor;">-39.0</div>
<div class="t" style="left:586.4px;top:534px;font-size:7.6px;color:#5a5e63;transform:scaleX(0.87);-webkit-text-stroke:0.12px currentColor;">0.32</div>
<div class="t" style="left:654.3px;top:534px;font-size:7.6px;color:#5a5e63;transform:scaleX(0.87);-webkit-text-stroke:0.12px currentColor;">5942</div>
<div class="t" style="left:760px;top:534px;font-size:7.6px;color:#5a5e63;transform:scaleX(0.87);-webkit-text-stroke:0.12px currentColor;">0</div>
<div class="a" style="left:266.5px;top:547.1400000000001px;width:596px;height:1px;background:#ebebeb"></div>
<div class="t" style="left:270.6px;top:554px;font-size:7.6px;color:#4a4e54;font-weight:bold;transform:scaleX(0.93);">18</div>
<div class="t" style="left:330.7px;top:554px;font-size:7.6px;color:#5a5e63;transform:scaleX(0.87);-webkit-text-stroke:0.12px currentColor;">256QAM</div>
<div class="t" style="left:390.7px;top:554px;font-size:7.6px;color:#5a5e63;transform:scaleX(0.87);-webkit-text-stroke:0.12px currentColor;">634.000</div>
<div class="t" style="left:450.8px;top:554px;font-size:7.6px;color:#5a5e63;transform:scaleX(0.87);-webkit-text-stroke:0.12px currentColor;">7.4</div>
<div class="t" style="left:518.7px;top:554px;font-size:7.6px;color:#5a5e63;transform:scaleX(0.87);-webkit-text-stroke:0.12px currentColor;">-40.4</div>
<div class="t" style="left:586.4px;top:554px;font-size:7.6px;color:#5a5e63;transform:scaleX(0.87);-webkit-text-stroke:0.12px currentColor;">0.32</div>
<div class="t" style="left:654.3px;top:554px;font-size:7.6px;color:#5a5e63;transform:scaleX(0.87);-webkit-text-stroke:0.12px currentColor;">5696</div>
<div class="t" style="left:760px;top:554px;font-size:7.6px;color:#5a5e63;transform:scaleX(0.87);-webkit-text-stroke:0.12px currentColor;">0</div>
<div class="a" style="left:266.5px;top:566.86px;width:596px;height:1px;background:#ebebeb"></div>
<div class="t" style="left:270.6px;top:574px;font-size:7.6px;color:#4a4e54;font-weight:bold;transform:scaleX(0.93);">19</div>
<div class="t" style="left:330.7px;top:574px;font-size:7.6px;color:#5a5e63;transform:scaleX(0.87);-webkit-text-stroke:0.12px currentColor;">256QAM</div>
<div class="t" style="left:390.7px;top:574px;font-size:7.6px;color:#5a5e63;transform:scaleX(0.87);-webkit-text-stroke:0.12px currentColor;">642.000</div>
<div class="t" style="left:450.8px;top:574px;font-size:7.6px;color:#5a5e63;transform:scaleX(0.87);-webkit-text-stroke:0.12px currentColor;">7.3</div>
<div class="t" style="left:518.7px;top:574px;font-size:7.6px;color:#5a5e63;transform:scaleX(0.87);-webkit-text-stroke:0.12px currentColor;">-39.0</div>
<div class="t" style="left:586.4px;top:574px;font-size:7.6px;color:#5a5e63;transform:scaleX(0.87);-webkit-text-stroke:0.12px currentColor;">0.32</div>
<div class="t" style="left:654.3px;top:574px;font-size:7.6px;color:#5a5e63;transform:scaleX(0.87);-webkit-text-stroke:0.12px currentColor;">6069</div>
<div class="t" style="left:760px;top:574px;font-size:7.6px;color:#5a5e63;transform:scaleX(0.87);-webkit-text-stroke:0.12px currentColor;">0</div>
<div class="a" style="left:266.5px;top:586.58px;width:596px;height:1px;background:#ebebeb"></div>
<div class="t" style="left:270.6px;top:593px;font-size:7.6px;color:#4a4e54;font-weight:bold;transform:scaleX(0.93);">20</div>
<div class="t" style="left:330.7px;top:593px;font-size:7.6px;color:#5a5e63;transform:scaleX(0.87);-webkit-text-stroke:0.12px currentColor;">256QAM</div>
<div class="t" style="left:390.7px;top:593px;font-size:7.6px;color:#5a5e63;transform:scaleX(0.87);-webkit-text-stroke:0.12px currentColor;">650.000</div>
<div class="t" style="left:450.8px;top:593px;font-size:7.6px;color:#5a5e63;transform:scaleX(0.87);-webkit-text-stroke:0.12px currentColor;">7.1</div>
<div class="t" style="left:518.7px;top:593px;font-size:7.6px;color:#5a5e63;transform:scaleX(0.87);-webkit-text-stroke:0.12px currentColor;">-39.0</div>
<div class="t" style="left:586.4px;top:593px;font-size:7.6px;color:#5a5e63;transform:scaleX(0.87);-webkit-text-stroke:0.12px currentColor;">0.32</div>
<div class="t" style="left:654.3px;top:593px;font-size:7.6px;color:#5a5e63;transform:scaleX(0.87);-webkit-text-stroke:0.12px currentColor;">5544</div>
<div class="t" style="left:760px;top:593px;font-size:7.6px;color:#5a5e63;transform:scaleX(0.87);-webkit-text-stroke:0.12px currentColor;">0</div>
<div class="a" style="left:266.5px;top:606.3000000000001px;width:596px;height:1px;background:#ebebeb"></div>
</div>
</body></html>
